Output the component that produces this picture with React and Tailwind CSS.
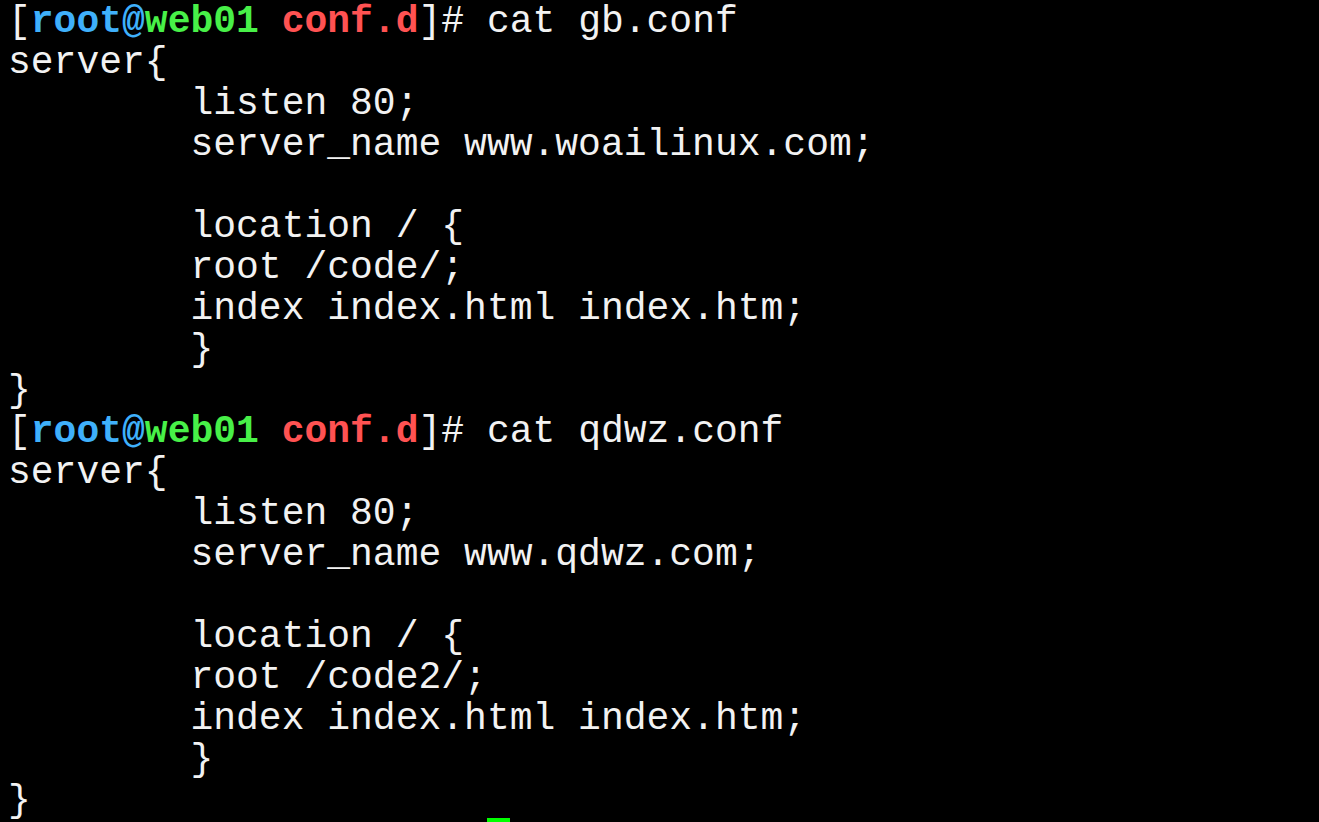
const conf = (name, host, root) => [
  { prompt: true, cmd: `cat ${name}` },
  "server{",
  "        listen 80;",
  `        server_name ${host};`,
  "",
  "        location / {",
  `        root ${root};`,
  "        index index.html index.htm;",
  "        }",
  "}",
];

const lines = [
  ...conf("gb.conf", "www.woailinux.com", "/code/"),
  ...conf("qdwz.conf", "www.qdwz.com", "/code2/"),
  { prompt: true, cmd: "", cursor: true },
];

function Prompt() {
  return (
    <>
      [<span className="font-bold text-[#3fb0fb]">root@</span>
      <span className="font-bold text-[#48f048]">web01</span>{" "}
      <span className="font-bold text-[#ff5252]">conf.d</span>]#{" "}
    </>
  );
}

export default function App() {
  return (
    <div className="h-[822px] w-[1319px] overflow-hidden bg-black text-[#f2f2f2]">
      <div
        className="mt-[1px] whitespace-pre pl-[8px] text-[38px] leading-[41px]"
        style={{ fontFamily: '"Liberation Mono", "Courier New", monospace' }}
      >
        {lines.map((line, i) =>
          typeof line === "string" ? (
            <div key={i} className="h-[41px]">
              {line}
            </div>
          ) : (
            <div key={i} className="h-[41px]">
              <Prompt />
              {line.cmd}
              {line.cursor && (
                <span className="relative -top-[3px] inline-block h-[41px] w-[23px] bg-[#00ff00] align-top" />
              )}
            </div>
          )
        )}
      </div>
    </div>
  );
}
